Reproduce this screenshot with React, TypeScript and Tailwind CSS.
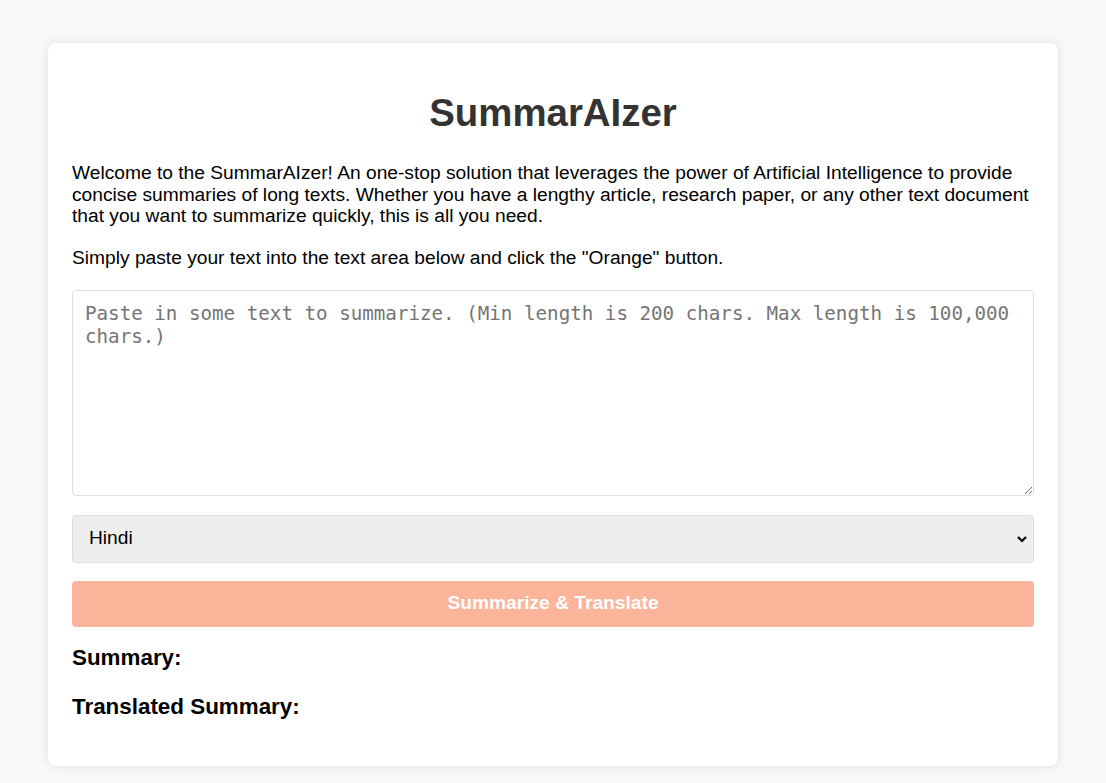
export default function App() {
  return (
    <div className="min-h-[783px] bg-[#f8f8f8] font-['Liberation_Sans',Arial,sans-serif] pt-[43px] px-[48px] pb-4">
      <div className="bg-white rounded-lg shadow-[0_0_10px_rgba(0,0,0,0.1)] px-6 pt-[48px] pb-[46px]">
        <h1 className="text-center text-[38.4px] font-bold text-[#333] leading-[44px] mb-[27px]">SummarAIzer</h1>
        <p className="text-[19.2px] leading-[21.5px] text-black">
          Welcome to the SummarAIzer! An one-stop solution that leverages the power of Artificial Intelligence to provide concise summaries of long texts. Whether you have a lengthy article, research paper, or any other text document that you want to summarize quickly, this is all you need.
        </p>
        <p className="text-[19.2px] leading-[21.5px] text-black mt-5">
          Simply paste your text into the text area below and click the "Orange" button.
        </p>
        <textarea
          className="mt-[22px] block w-full h-[206px] border border-[#ddd] rounded-[4px] px-3 pt-[11px] pb-[10px] font-['DejaVu_Sans_Mono',monospace] text-[19.2px] leading-[23px] placeholder:text-[#757575] resize-y outline-none"
          placeholder="Paste in some text to summarize. (Min length is 200 chars. Max length is 100,000 chars.)"
        />
        <div className="mt-[19px] relative">
          <select className="block w-full h-[48px] appearance-none bg-[#eee] border border-[#ddd] rounded-[4px] pl-4 pb-[2px] text-[19.2px] text-black outline-none">
            <option>Hindi</option>
          </select>
          <svg className="absolute right-[6px] top-[19px] pointer-events-none" width="12" height="10" viewBox="0 0 12 10">
            <path d="M2 3 L6 7 L10 3" stroke="#000" strokeWidth="2.2" fill="none" />
          </svg>
        </div>
        <button className="mt-[18px] block w-full h-[46px] pb-[2px] bg-[#fcb59a] rounded-[4px] text-white font-bold text-[19.2px]">
          Summarize &amp; Translate
        </button>
        <h2 className="mt-[18px] text-[22.4px] font-bold leading-[26px] text-black">Summary:</h2>
        <h2 className="mt-[23px] text-[22.4px] font-bold leading-[26px] text-black">Translated Summary:</h2>
      </div>
    </div>
  );
}
